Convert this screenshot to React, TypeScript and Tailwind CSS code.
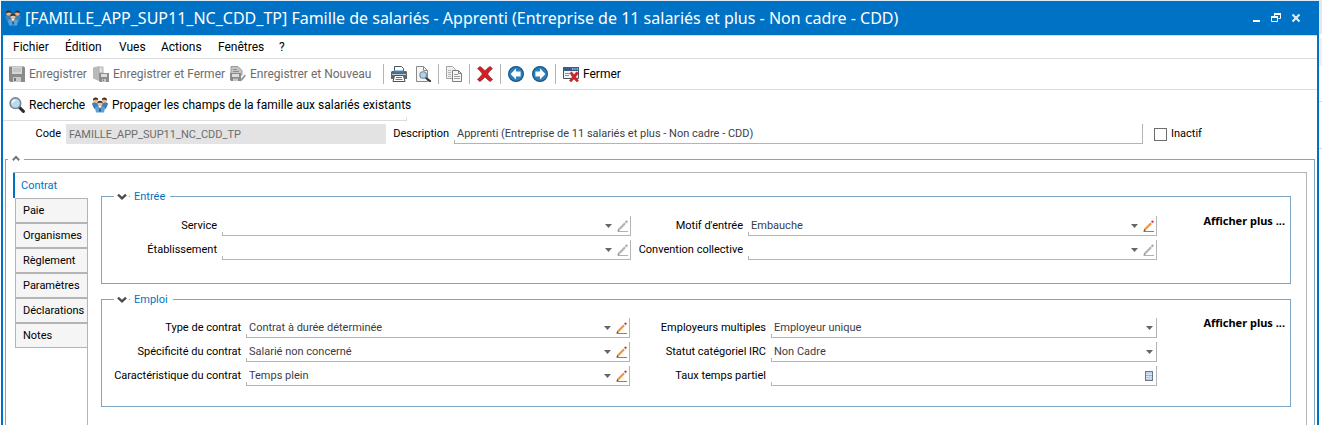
import type { ReactNode } from 'react';

const IconPeople = () => (
  <svg width="16" height="16" viewBox="0 0 16 16" className="shrink-0">
    <path d="M0 6.5Q1 5 3.5 5.2L7 7.5 6 12H2.5L1 9.5Z" fill="#3d7fb5" />
    <path d="M16 6.5Q15 5 12.5 5.2L9 7.5 10 12H13.5L15 9.5Z" fill="#3d7fb5" />
    <circle cx="3.6" cy="3.4" r="2.4" fill="#e8b48c" />
    <path d="M1 3.4Q1 0.6 3.6 0.6T6.2 3Q4 1.8 1 3.4Z" fill="#3b2a1e" />
    <circle cx="12.4" cy="3.4" r="2.4" fill="#e8b48c" />
    <path d="M9.8 3Q10 0.6 12.4 0.6T15 3.4Q12 1.8 9.8 3Z" fill="#3b2a1e" />
    <path d="M3 11Q3.4 9.4 5.4 9.2H10.6Q12.6 9.4 13 11L12 15.6H4Z" fill="#5aa2d8" />
    <path d="M6.6 9L8 12 9.4 9Z" fill="#ffffff" />
    <path d="M7.7 10.4H8.4L8.8 14 8 15 7.3 14Z" fill="#24405c" />
    <circle cx="8" cy="6.6" r="2.5" fill="#f2c49e" />
    <path d="M5.2 6.6Q5.2 3.7 8 3.7T10.8 6.6Q8.4 4.8 5.2 6.6Z" fill="#4a3323" />
  </svg>
);

const IconSave = () => (
  <svg width="16" height="16" viewBox="0 0 16 16" className="shrink-0">
    <path d="M0 0.5H15L16 1.5V16H1.5L0 14.5Z" fill="#8a8a8a" />
    <path d="M3 1H13V8H3Z" fill="#d6d6d6" />
    <path d="M4 3H12M4 5H12" stroke="#b4b4b4" />
    <path d="M4 11H12V16H4Z" fill="#c9c9c9" />
    <path d="M5 12H7V15H5Z" fill="#777777" />
  </svg>
);

const IconSaveClose = () => (
  <svg width="16" height="16" viewBox="0 0 16 16" className="shrink-0">
    <path d="M0 1.5L6 0V15L0 12.5Z" fill="#b9b9b9" />
    <path d="M6 1H10V7H6Z" fill="#dedede" stroke="#b0b0b0" />
    <path d="M6 7H16V16H7L6 15Z" fill="#8d8d8d" />
    <path d="M8 8H14V11H8Z" fill="#dddddd" />
    <path d="M9 13H13V16H9Z" fill="#c8c8c8" />
    <path d="M10 13.5H11V15H10Z" fill="#777777" />
  </svg>
);

const IconSaveNew = () => (
  <svg width="16" height="16" viewBox="0 0 16 16" className="shrink-0">
    <path d="M1 0.5H8L12 4.5V9H1Z" fill="#c4c4c4" stroke="#9a9a9a" />
    <path d="M3 3.5H7M3 5.5H9" stroke="#8f8f8f" />
    <path d="M0 7H11V15H1L0 14Z" fill="#8a8a8a" />
    <path d="M2 8H9V11H2Z" fill="#dddddd" />
    <path d="M3 12.5H8V15H3Z" fill="#c6c6c6" />
    <path d="M10.5 15.5L11.2 12.6 14.5 8.4 16 9.6 12.9 13.8Z" fill="#9b9b9b" />
  </svg>
);

const IconPrinter = () => (
  <svg width="16" height="16" viewBox="0 0 16 16" className="shrink-0">
    <path d="M3.5 5V0.5H10.5L12.5 2.5V5" fill="#ffffff" stroke="#4a5560" />
    <path d="M1 5H15L16 6V13H0V6Z" fill="#5b666f" />
    <path d="M3 4.5H13V6.5H3Z" fill="#3a83c0" />
    <path d="M1 8.5H15" stroke="#c4cacf" />
    <path d="M3.5 9.5H12.5L14 15.5H2Z" fill="#ffffff" stroke="#4a5560" />
    <path d="M5 11.5H11M4.5 13.5H11.5" stroke="#3a83c0" />
  </svg>
);

const IconPreview = () => (
  <svg width="16" height="16" viewBox="0 0 16 16" className="shrink-0">
    <path d="M1.5 0.5H8.5L12.5 4.5V15.5H1.5Z" fill="#f5f5f5" stroke="#8a8a8a" />
    <path d="M8.5 0.5V4.5H12.5" fill="none" stroke="#8a8a8a" />
    <path d="M10.5 11.5L15 15.2" stroke="#3a3a3a" strokeWidth="2.2" strokeLinecap="round" />
    <circle cx="8.2" cy="9" r="3.3" fill="#a9d5f2" stroke="#7b868f" strokeWidth="1.1" />
  </svg>
);

const IconCopy = () => (
  <svg width="16" height="16" viewBox="0 0 16 16" className="shrink-0">
    <path d="M0.5 0.5H6.5L9.5 3.5V12.5H0.5Z" fill="#f0f0f0" stroke="#a5a5a5" />
    <path d="M2 4.5H5M2 6.5H5M2 8.5H5M2 10.5H5" stroke="#b5b5b5" />
    <path d="M6.5 4.5H12.5L15.5 7.5V15.5H6.5Z" fill="#f7f7f7" stroke="#7d7d7d" />
    <path d="M12.5 4.5V7.5H15.5" fill="none" stroke="#7d7d7d" />
    <path d="M8 8.5H12M8 10.5H14M8 12.5H14" stroke="#9c9c9c" />
  </svg>
);

const IconDelete = () => (
  <svg width="16" height="16" viewBox="0 0 16 16" className="shrink-0">
    <path
      d="M0.6 2.6L3 0.4Q5.6 2 8 4.8 10.2 2 13 0.4L15.4 2.6Q12.6 5 10.6 8 12.6 11 15.6 13.4L13.2 15.6Q10.4 13.8 8 11 5.6 13.8 2.8 15.6L0.4 13.4Q3.4 11 5.4 8 3.4 5 0.6 2.6Z"
      fill="#d11f26"
      stroke="#8f1217"
      strokeWidth="0.6"
    />
  </svg>
);

const IconArrow = ({ dir }: { dir: 'left' | 'right' }) => (
  <svg width="16" height="16" viewBox="0 0 16 16" className={dir === 'right' ? 'shrink-0 rotate-180' : 'shrink-0'}>
    <circle cx="8" cy="8" r="7.4" fill="#2a7fbd" stroke="#1b5687" strokeWidth="1.2" />
    <path d="M2.6 8L8 2.6V5.4H12.6V10.6H8V13.4Z" fill="#ffffff" />
  </svg>
);

const IconCloseWindow = () => (
  <svg width="16" height="16" viewBox="0 0 16 16" className="shrink-0">
    <path d="M0.5 1.5H15.5V12.5H0.5Z" fill="#f4f4f4" stroke="#4d5358" />
    <path d="M0 1H16V5H0Z" fill="#335f8a" />
    <path d="M9 3H10.4M11.4 3H12.6M13.6 3H15" stroke="#ffffff" />
    <path d="M2 7.5H7M2 9.5H6" stroke="#8a9299" />
    <path d="M7 7.2L8.6 5.8 11 8.8 13.6 5.8 15.4 7.2 12.6 11 15.6 14.6 14 16 11 13 8 16 6.4 14.6 9.4 11Z" fill="#d3222a" stroke="#8f1217" strokeWidth="0.4" />
  </svg>
);

const IconSearch = () => (
  <svg width="16" height="16" viewBox="0 0 16 16" className="shrink-0">
    <path d="M10.4 10.4L14.4 14.4" stroke="#2e2e2e" strokeWidth="3" strokeLinecap="round" />
    <circle cx="6.4" cy="6.2" r="5.3" fill="#b5dcf5" stroke="#7b868f" strokeWidth="1.6" />
    <path d="M3.4 6Q3.6 3.4 6.4 3.2" fill="none" stroke="#ffffff" strokeWidth="1.3" />
  </svg>
);

const IconPencil = ({ disabled }: { disabled?: boolean }) => (
  <svg width="11" height="12" viewBox="0 0 11 12" className="block">
    <path d="M1 11.5H11" stroke={disabled ? '#b0b0b0' : '#3d97d0'} />
    <path d="M0.3 11.8L1.2 8.8 2.8 10.2Z" fill={disabled ? '#8a8a8a' : '#5b4a35'} />
    <path d="M1.2 8.8L7.3 2.4 8.9 4 2.8 10.2Z" fill={disabled ? '#b4b4b4' : '#f0953a'} />
    <path d="M7.3 2.4L8.3 1.4 9.9 3 8.9 4Z" fill={disabled ? '#d5d5d5' : '#d8dde2'} />
    <path d="M8.2 1.4Q9.2 0 10.3 1T9.9 3Z" fill={disabled ? '#9c9c9c' : '#d3222a'} />
  </svg>
);

const IconCalculator = () => (
  <svg width="8" height="10" viewBox="0 0 8 10" className="block">
    <path d="M0 0H8V10H0Z" fill="#66788f" />
    <path d="M1 1H7V3H1Z" fill="#bcd4fa" />
    <path d="M1 3H7V9H1Z" fill="#dfe5ee" />
    <path d="M1 4.5H7" stroke="#e59a90" />
    <path d="M1 6.5H7M1 8.5H7" stroke="#b6c5de" />
    <path d="M3 5V9M5 5V9" stroke="#c4d0e4" strokeWidth="0.6" />
  </svg>
);

const IconChevron = ({ up }: { up?: boolean }) => (
  <svg width="10" height="8" viewBox="0 0 10 8" className={up ? 'block rotate-180' : 'block'}>
    <path
      d={up ? 'M1.8 2.8L5 6 8.2 2.8' : 'M1 1.6L5 5.4 9 1.6'}
      fill="none"
      stroke={up ? '#777777' : '#4d4d4d'}
      strokeWidth={up ? 2 : 2.4}
    />
  </svg>
);

const menus = [
  { label: 'Fichier', width: 'w-[52px]' },
  { label: 'Édition', width: 'w-[54px]' },
  { label: 'Vues', width: 'w-[42px]' },
  { label: 'Actions', width: 'w-[57px]' },
  { label: 'Fenêtres', width: 'w-[61px]' },
  { label: '?', width: 'w-4' },
];
const tabs = ['Paie', 'Organismes', 'Règlement', 'Paramètres', 'Déclarations', 'Notes'];

type FieldProps = {
  id: string;
  label: string;
  value?: string;
  kind?: 'lookup' | 'list' | 'number';
};

const Field = ({ id, label, value = '', kind = 'lookup' }: FieldProps) => (
  <>
    <label htmlFor={id} className="pr-[5px] text-right text-black whitespace-nowrap">
      {label}
    </label>
    <div className="flex h-5 min-w-0 items-center border-r border-b border-[#b4b4b4]">
      <span className="h-[3px] w-px self-end bg-[#b4b4b4]" />
      {kind === 'number' ? (
        <>
          <input id={id} defaultValue={value} className="h-full min-w-0 flex-1 pl-[2px] outline-none" />
          <button type="button" aria-label="Calculatrice" className="mr-[3px]">
            <IconCalculator />
          </button>
        </>
      ) : (
        <>
          <div className="relative h-full min-w-0 flex-1">
            <select id={id} defaultValue={value} className="h-full w-full appearance-none pt-px pl-[2px] outline-none">
              <option>{value}</option>
            </select>
            <svg width="7" height="4" viewBox="0 0 7 4" className="pointer-events-none absolute top-2 right-[3px]">
              <path d="M0 0H7L3.5 4Z" fill="#666666" />
            </svg>
          </div>
          {kind === 'lookup' && (
            <button type="button" aria-label={`Modifier ${label}`} className="mr-[2px] ml-[2px]">
              <IconPencil disabled={!value} />
            </button>
          )}
        </>
      )}
    </div>
  </>
);

const Group = ({ title, className, children }: { title: string; className: string; children: ReactNode }) => (
  <fieldset className="border border-[#7ea6c4]">
    <legend className="ml-3 flex h-[15px] items-center gap-[2px] px-[3px] text-[#0072c6]">
      <button type="button" aria-label={`Réduire ${title}`}>
        <IconChevron />
      </button>
      <span className="h-px w-px bg-[#7ea6c4]" />
      <span className="px-[2px] leading-[15px]">{title}</span>
    </legend>
    <div className={className}>{children}</div>
  </fieldset>
);

const MoreLink = () => (
  <a
    href="#plus"
    className="self-start pr-[5px] text-right font-['Noto_Sans',sans-serif] leading-[10px] font-bold text-black whitespace-nowrap"
  >
    Afficher plus ...
  </a>
);

const Separator = () => <span className="mr-[7px] h-5 w-px bg-[#b4b4b4]" />;

const ToolButton = ({ label, className = '', children }: { label: string; className?: string; children: ReactNode }) => (
  <button type="button" aria-label={label} className={`shrink-0 ${className}`}>
    {children}
  </button>
);

const TitleBar = () => (
  <header className="flex h-[34px] items-center bg-[#0072c6] pr-[18px] pl-1 text-white">
    <IconPeople />
    <h1 className="ml-1 flex-1 truncate font-['Noto_Sans',sans-serif] text-[16px]">
      [FAMILLE_APP_SUP11_NC_CDD_TP] Famille de salariés - Apprenti (Entreprise de 11 salariés et plus - Non cadre - CDD)
    </h1>
    <div className="flex items-center gap-[10px]">
      <button type="button" aria-label="Réduire">
        <svg width="8" height="10" viewBox="0 0 8 10" className="block">
          <path d="M0 7H7V9H0Z" fill="#ffffff" />
        </svg>
      </button>
      <button type="button" aria-label="Restaurer">
        <svg width="10" height="10" viewBox="0 0 10 10" className="block">
          <path d="M3.5 4V1H9.5V5.5H7.5M3 1H10" fill="none" stroke="#ffffff" />
          <path d="M3 0H10V2H3ZM0 3H7V5H0Z" fill="#ffffff" />
          <path d="M0.5 4V8.5H6.5V4" fill="none" stroke="#ffffff" />
        </svg>
      </button>
      <button type="button" aria-label="Fermer la fenêtre">
        <svg width="10" height="10" viewBox="0 0 10 10" className="block">
          <path d="M1.5 1.5L8.5 8.5M8.5 1.5L1.5 8.5" stroke="#e6eef6" strokeWidth="2" />
        </svg>
      </button>
    </div>
  </header>
);

const Toolbars = () => (
  <div className="text-[12px] text-black">
    <nav className="flex h-[23px] items-center border-t border-[#d8d8d8] pl-[10px]">
      {menus.map(({ label, width }) => (
        <button key={label} type="button" className={`text-left ${width}`}>
          {label}
        </button>
      ))}
    </nav>
    <div className="flex h-8 items-center border-y border-[#dcdcdc] pl-[6px] whitespace-nowrap">
      <button type="button" className="flex w-[84px] items-center gap-1 text-[#6d6d6d]">
        <IconSave />
        Enregistrer
      </button>
      <button type="button" className="flex w-[137px] items-center gap-1 text-[#6d6d6d]">
        <IconSaveClose />
        Enregistrer et Fermer
      </button>
      <button type="button" className="flex w-[153px] items-center gap-1 text-[#6d6d6d]">
        <IconSaveNew />
        Enregistrer et Nouveau
      </button>
      <Separator />
      <ToolButton label="Imprimer" className="mr-2">
        <IconPrinter />
      </ToolButton>
      <ToolButton label="Aperçu" className="mr-[7px]">
        <IconPreview />
      </ToolButton>
      <Separator />
      <ToolButton label="Dupliquer" className="mr-[7px]">
        <IconCopy />
      </ToolButton>
      <Separator />
      <ToolButton label="Supprimer" className="mr-[7px]">
        <IconDelete />
      </ToolButton>
      <Separator />
      <ToolButton label="Précédent" className="mr-2">
        <IconArrow dir="left" />
      </ToolButton>
      <ToolButton label="Suivant" className="mr-[7px]">
        <IconArrow dir="right" />
      </ToolButton>
      <Separator />
      <button type="button" className="flex items-center gap-1">
        <IconCloseWindow />
        Fermer
      </button>
    </div>
    <div className="flex h-[31px] w-[404px] items-end border-b border-[#dcdcdc] whitespace-nowrap">
      <div className="flex h-full min-w-0 flex-1 items-center pl-[6px]">
        <button type="button" className="flex w-[83px] shrink-0 items-center gap-1">
          <IconSearch />
          Recherche
        </button>
        <button type="button" className="flex items-center gap-1">
          <IconPeople />
          Propager les champs de la famille aux salariés existants
        </button>
      </div>
      <span className="h-[3px] w-px bg-[#dcdcdc]" />
    </div>
  </div>
);

const App = () => (
  <div className="flex min-h-screen bg-white pl-px font-['Roboto',sans-serif] text-[11px] text-[#3c3c46]">
    <main className="flex min-w-0 flex-1 flex-col border-t border-t-[#dfeaf5]">
      <TitleBar />
      <div className="flex flex-1 flex-col border-x-2 border-[#0072c6]">
        <Toolbars />

        <div className="mt-[3px] flex h-5 items-center">
          <label htmlFor="code" className="w-[63px] pr-[5px] text-right text-black">
            Code
          </label>
          <input id="code" disabled defaultValue="FAMILLE_APP_SUP11_NC_CDD_TP" className="h-5 w-80 bg-[#e3e3e3] pl-[3px] text-[#6d6d6d]" />
          <label htmlFor="description" className="w-[68px] pr-[5px] text-right text-black">
            Description
          </label>
          <div className="flex h-5 min-w-0 flex-1 border-r border-b border-[#b4b4b4]">
            <span className="h-[3px] w-px self-end bg-[#b4b4b4]" />
            <input
              id="description"
              defaultValue="Apprenti (Entreprise de 11 salariés et plus - Non cadre - CDD)"
              className="min-w-0 flex-1 pt-px pl-[2px] outline-none"
            />
          </div>
          <label className="flex w-[174px] items-center gap-1 pl-[11px] text-black">
            <input type="checkbox" className="h-[13px] w-[13px] appearance-none border border-[#6d6d6d] bg-white" />
            Inactif
          </label>
        </div>

        <fieldset className="mx-[2px] mt-2 flex flex-1 flex-col border border-b-0 border-[#7ea6c4]">
          <legend className="ml-[2px] flex h-[14px] items-center px-[3px]">
            <button type="button" aria-label="Réduire l'en-tête">
              <IconChevron up />
            </button>
          </legend>
          <div className="mt-[6px] mr-[7px] ml-[7px] flex flex-1 border-t border-r border-[#b4b4b4]">
            <div className="flex w-[75px] flex-col">
              <button type="button" className="h-[25px] border-l-2 border-[#0072c6] pt-px pl-[6px] text-left text-[#0072c6]">
                Contrat
              </button>
              <div className="ml-[2px] flex flex-1 flex-col border-r border-[#b4b4b4]">
                {tabs.map((tab) => (
                  <button
                    key={tab}
                    type="button"
                    className="h-[25px] border-y border-l border-[#b4b4b4] bg-[#f5f5f5] pt-[2px] pl-[7px] text-left text-black"
                  >
                    {tab}
                  </button>
                ))}
              </div>
            </div>

            <div className="mt-4 mr-[15px] ml-[13px] flex min-w-0 flex-1 flex-col gap-2">
              <Group
                title="Entrée"
                className="grid grid-cols-[120px_1fr_117px_1fr_133px] items-center gap-y-1 pt-3 pb-[23px]"
              >
                <Field id="service" label="Service" />
                <Field id="motif" label="Motif d'entrée" value="Embauche" />
                <MoreLink />
                <Field id="etablissement" label="Établissement" />
                <Field id="convention" label="Convention collective" />
              </Group>
              <Group
                title="Emploi"
                className="grid grid-cols-[144px_384fr_141px_386fr_133px] items-center gap-y-1 pt-[11px] pb-5"
              >
                <Field id="type" label="Type de contrat" value="Contrat à durée déterminée" />
                <Field id="employeurs" label="Employeurs multiples" value="Employeur unique" kind="list" />
                <MoreLink />
                <Field id="specificite" label="Spécificité du contrat" value="Salarié non concerné" />
                <Field id="statut" label="Statut catégoriel IRC" value="Non Cadre" kind="list" />
                <span />
                <Field id="caracteristique" label="Caractéristique du contrat" value="Temps plein" />
                <Field id="taux" label="Taux temps partiel" kind="number" />
              </Group>
            </div>
          </div>
        </fieldset>
      </div>
    </main>
    <aside className="flex w-[3px] flex-col">
      <div className="h-[34px] bg-[#e6e6ee]" />
      <div className="mt-1 h-7 bg-[#f0f0f0]" />
      <div className="h-9 border-b border-[#d4d4d4]" />
      <div className="h-[47px] border-b border-[#d4d4d4]" />
    </aside>
  </div>
);

export default App;
